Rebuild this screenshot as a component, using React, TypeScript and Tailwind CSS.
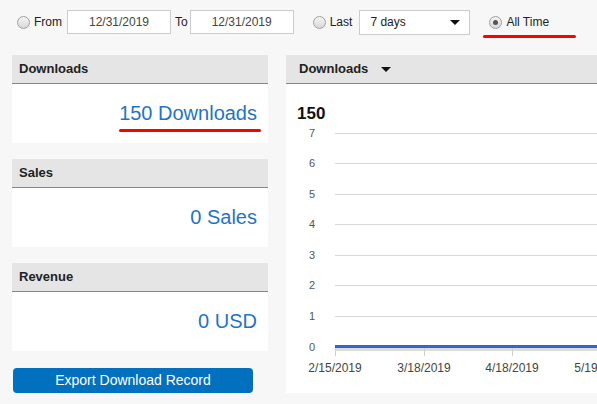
import React from "react";

const Radio = ({ checked }: { checked?: boolean }) => (
  <span className="w-[13px] h-[13px] rounded-full border border-[#a0a0a0] bg-[linear-gradient(#f4f4f4,#d8d8d8)] flex items-center justify-center shrink-0">
    {checked && <span className="w-[5px] h-[5px] rounded-full bg-[#555]" />}
  </span>
);

const Card = ({ title, value, underline }: { title: string; value: string; underline?: boolean }) => (
  <div className="w-[256px]">
    <div className="h-[29px] bg-[#e5e5e5] border-b border-[#3a9fd6] flex items-center pl-[7px] text-[13px] font-bold text-[#222]">
      {title}
    </div>
    <div className="h-[59px] bg-white flex items-center justify-end pr-[11px]">
      <span className="relative text-[20px] text-[#1f75c4] leading-none mt-[-2px]">
        {value}
        {underline && <span className="absolute left-0 right-[-4px] top-[26px] h-[3px] rounded-full bg-[#ff0000]" />}
      </span>
    </div>
  </div>
);

export default function App() {
  const grid = [9, 39, 70, 100, 131, 161, 192];
  const xs = [
    { x: 49, l: "2/15/2019" },
    { x: 138, l: "3/18/2019" },
    { x: 226, l: "4/18/2019" },
    { x: 315, l: "5/19/2019" },
  ];
  return (
    <div className="w-[597px] h-[404px] overflow-hidden bg-[#f7f7f7] font-['Liberation_Sans',Arial,sans-serif] text-[12px] text-[#222]">
      <div className="h-[55px] flex items-start pt-[9px]">
        <div className="flex items-center h-[26px] pl-[17px]">
          <Radio />
          <span className="ml-[4px]">From</span>
          <div className="ml-[5px] w-[104px] h-[24px] border border-[#ccc] bg-white flex items-center justify-center text-[#444]">12/31/2019</div>
          <span className="ml-[4px]">To</span>
          <div className="ml-[2px] w-[104px] h-[24px] border border-[#ccc] bg-white flex items-center justify-center text-[#444]">12/31/2019</div>
          <span className="ml-[19px]"><Radio /></span>
          <span className="ml-[4px]">Last</span>
          <div className="ml-[7px] w-[111px] h-[25px] border border-[#ccc] bg-white flex items-center justify-between pl-[10px] pr-[9px]">
            <span>7 days</span>
            <svg width="10" height="5" viewBox="0 0 10 5"><path d="M0 0h10L5 5z" fill="#111" /></svg>
          </div>
          <span className="ml-[19px]"><Radio checked /></span>
          <span className="ml-[4px] relative">
            All Time
            <span className="absolute left-[-23px] w-[93px] top-[22px] h-[3px] rounded-full bg-[#ff0000]" />
          </span>
        </div>
      </div>
      <div className="flex pl-[12px] gap-[18px]">
        <div className="flex flex-col gap-[16px]">
          <Card title="Downloads" value="150 Downloads" underline />
          <Card title="Sales" value="0 Sales" />
          <Card title="Revenue" value="0 USD" />
          <button className="ml-[1px] mt-[1px] w-[240px] h-[25px] rounded-[4px] bg-[#0070bf] text-white text-[14px]">
            Export Download Record
          </button>
        </div>
        <div className="w-[330px] shrink-0">
          <div className="h-[29px] bg-[#e5e5e5] border-b border-[#3a9fd6] flex items-center pl-[13px] text-[13px] font-bold text-[#222] gap-[13px]">
            Downloads
            <svg width="10" height="5" viewBox="0 0 10 5"><path d="M0 0h10L5 5z" fill="#111" /></svg>
          </div>
          <div className="h-[309px] bg-white pt-[21px]">
            <div className="pl-[11px] text-[17px] font-bold leading-[18px] text-[#111]">150</div>
            <svg width="330" height="270" className="block mt-[1px]">
              {grid.map((y, i) => (
                <g key={i}>
                  <line x1="49" x2="330" y1={y + 0.5} y2={y + 0.5} stroke="#d9d9d9" />
                  <text x="26" y={y + 4} fontSize="11" fill="#555" textAnchor="middle" fontFamily="Liberation Sans, Arial, sans-serif">{7 - i}</text>
                </g>
              ))}
              <text x="26" y={227} fontSize="11" fill="#555" textAnchor="middle" fontFamily="Liberation Sans, Arial, sans-serif">0</text>
              <rect x="49" y="224" width="281" height="3" fill="#dcdcdc" />
              <rect x="49" y="221" width="281" height="3" fill="#3366cc" />
              {xs.map((t) => (
                <g key={t.l}>
                  <line x1={t.x + 0.5} x2={t.x + 0.5} y1="224" y2="232" stroke="#cfcfcf" />
                  <text x={t.x} y="248" fontSize="12" fill="#444" textAnchor="middle" fontFamily="Liberation Sans, Arial, sans-serif">{t.l}</text>
                </g>
              ))}
            </svg>
          </div>
        </div>
      </div>
    </div>
  );
}
